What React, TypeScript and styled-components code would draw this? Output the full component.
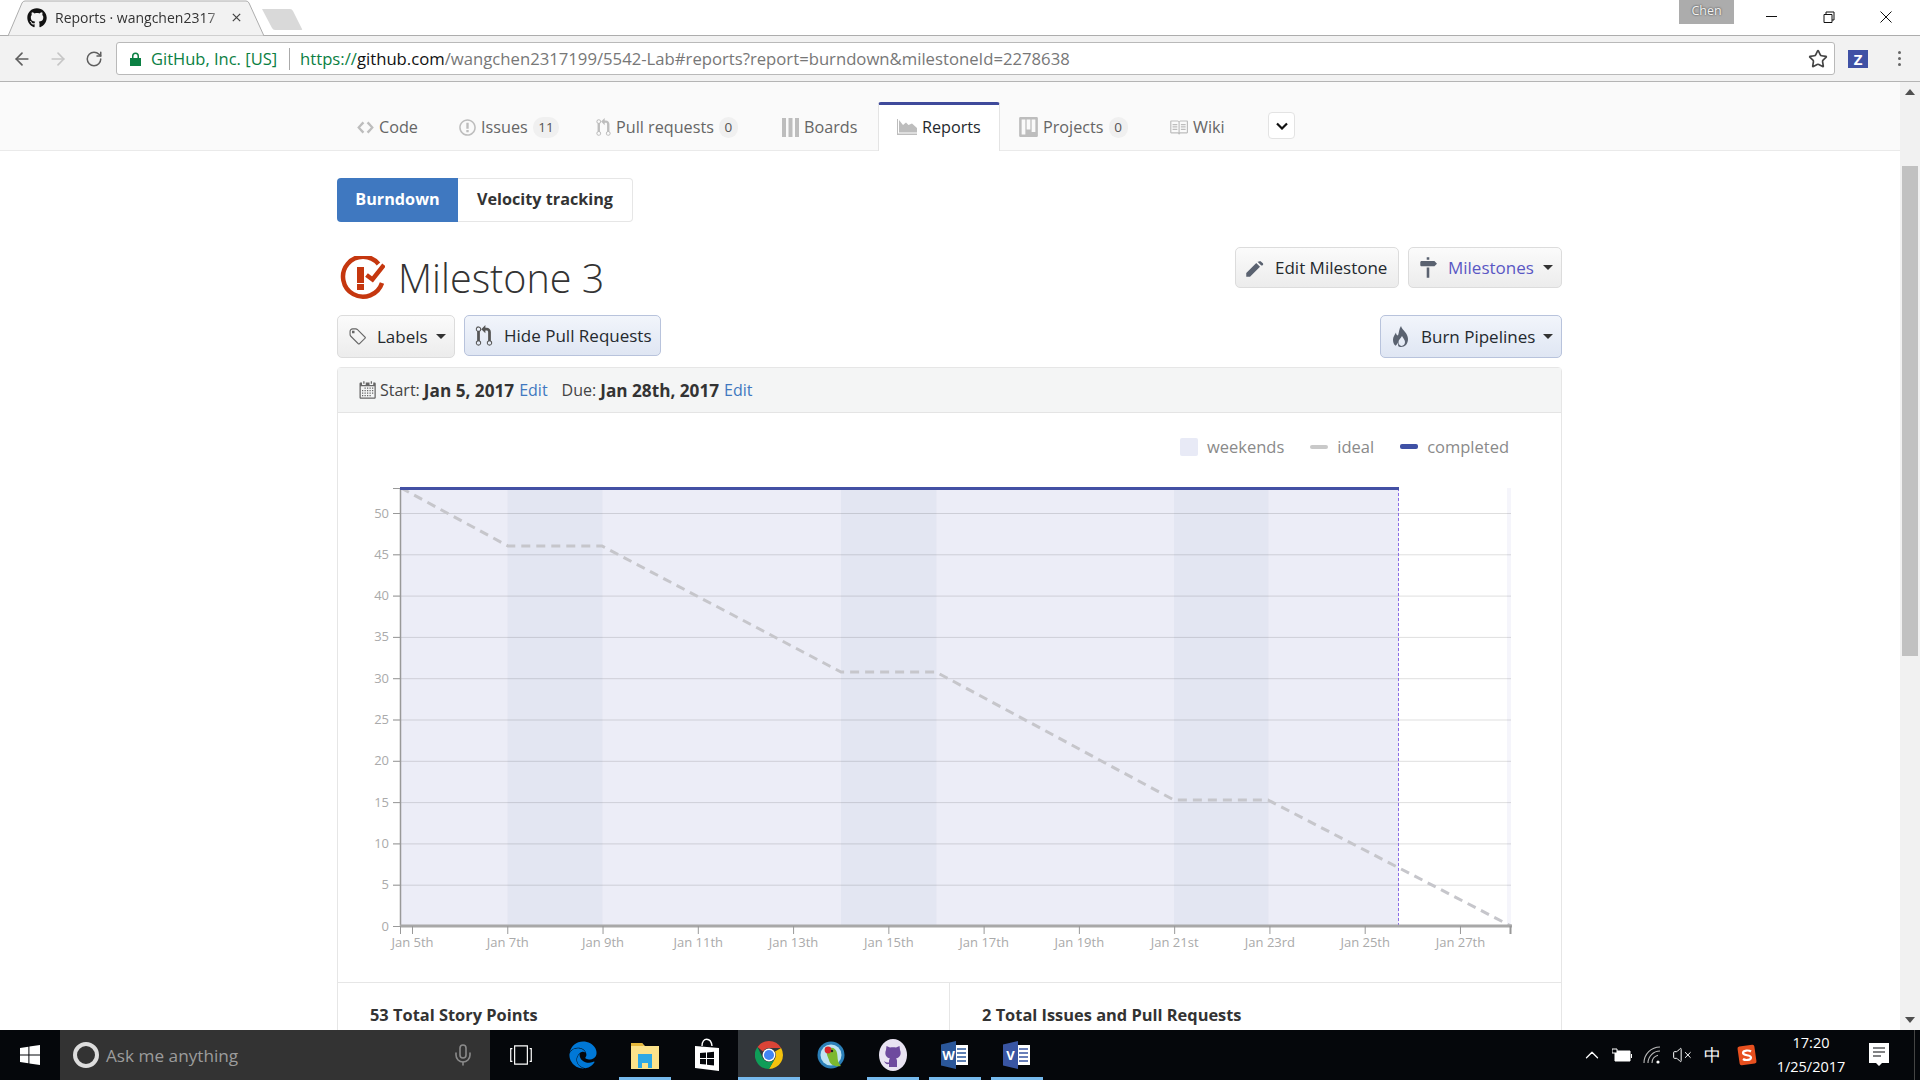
import React from 'react'
import styled, { createGlobalStyle } from 'styled-components'
import { ArrowLeft, ArrowRight, RotateCw, Star, Mic, ChevronUp, VolumeX } from 'lucide-react'
import { FaEdge, FaGithub } from 'react-icons/fa'

const FONT = `"Open Sans", "Noto Sans", "Liberation Sans", sans-serif`

const GlobalStyle = createGlobalStyle`
  html, body {
    margin: 0;
    padding: 0;
    height: 100%;
    overflow: hidden;
    background: #fff;
    font-family: ${FONT};
  }
`

const Screen = styled.div`
  width: 1920px;
  height: 1080px;
  display: flex;
  flex-direction: column;
  overflow: hidden;
`

/* browser chrome */
const TabStrip = styled.div`
  height: 35px;
  flex: none;
  position: relative;
  display: flex;
  align-items: center;
  border-bottom: 1px solid #adadad;
`
const TabShape = styled.svg`
  position: absolute;
  left: 0;
  top: 0;
`
const BrowserTab = styled.div`
  position: relative;
  margin-left: 27px;
  width: 225px;
  height: 35px;
  display: flex;
  align-items: center;
  gap: 8px;
  font-size: 14px;
  color: #333;
`
const TabTitle = styled.span`
  width: 169px;
  white-space: nowrap;
  -webkit-mask-image: linear-gradient(90deg, #000 90%, transparent);
  mask-image: linear-gradient(90deg, #000 90%, transparent);
`
const WindowControls = styled.div`
  position: absolute;
  right: 6px;
  top: 0;
  display: flex;
  align-items: flex-start;
`
const UserBadge = styled.div`
  width: 55px;
  height: 24px;
  margin-right: 9px;
  background: #acacac;
  color: #f4f4f4;
  font-size: 12.5px;
  line-height: 22px;
  text-align: center;
  text-shadow: 0 0 2px #222;
`
const WindowButton = styled.div`
  width: 57px;
  height: 34px;
  display: flex;
  align-items: center;
  justify-content: center;
`
const Toolbar = styled.div`
  height: 45px;
  flex: none;
  display: flex;
  align-items: center;
  padding-left: 4px;
  background: #f2f2f2;
  border-bottom: 1px solid #b4b4b4;
  color: #5f6368;
`
const NavButton = styled.div<{ $faded?: boolean }>`
  width: 36px;
  display: flex;
  justify-content: center;
  color: ${p => (p.$faded ? '#c6c6c6' : '#5f5f5f')};
`
const AddressBar = styled.div`
  width: 1719px;
  height: 33px;
  margin-left: 4px;
  box-sizing: border-box;
  display: flex;
  align-items: center;
  background: #fff;
  border: 1px solid #b9b9b9;
  border-radius: 3px;
  font-size: 16.5px;
  white-space: nowrap;
  position: relative;
`
const LockIcon = styled.svg`
  margin-left: 13px;
  margin-right: 10px;
`
const SecureName = styled.span`
  color: #0b8043;
  width: 126px;
`
const UrlDivider = styled.span`
  width: 1px;
  height: 22px;
  background: #aaa;
  margin: 0 10px 0 12px;
`
const UrlPart = styled.span<{ $tone: string }>`
  color: ${p => p.$tone};
  font-size: 16.7px;
`
const StarButton = styled.div`
  position: absolute;
  right: 6px;
  top: 6px;
  color: #444;
  line-height: 0;
`
const ExtensionIcon = styled.div`
  width: 20px;
  height: 18px;
  margin-left: 13px;
  background: #3f51a5;
  color: #fff;
  font-size: 15px;
  font-weight: 700;
  line-height: 18px;
  text-align: center;
`
const Kebab = styled.div`
  margin-left: 30px;
  display: flex;
  flex-direction: column;
  gap: 3px;
  span {
    width: 3px;
    height: 3px;
    border-radius: 50%;
    background: #666;
  }
`

/* page */
const Body = styled.div`
  flex: 1;
  min-height: 0;
  display: flex;
`
const Page = styled.div`
  flex: 1;
  min-width: 0;
  overflow: hidden;
`
const RepoNav = styled.nav`
  height: 68px;
  box-sizing: content-box;
  background: #fafafa;
  border-bottom: 1px solid #eaeaea;
  padding-left: 338px;
  display: flex;
  align-items: flex-end;
`
const RepoTab = styled.div<{ $width: number; $active?: boolean }>`
  width: ${p => p.$width}px;
  height: 49px;
  box-sizing: border-box;
  display: flex;
  align-items: center;
  gap: 5px;
  padding-left: 19px;
  padding-top: 1px;
  margin-bottom: -1px;
  font-size: 16.2px;
  color: ${p => (p.$active ? '#24292e' : '#666')};
  white-space: nowrap;
  ${p =>
    p.$active &&
    `
    background: #fff;
    border: 1px solid #e4e4e4;
    border-top: 3px solid #3f4a9b;
    border-bottom: 0;
    border-radius: 3px 3px 0 0;
    padding-left: 18px;
    margin-left: 2px;
    padding-top: 0;
    padding-bottom: 2px;
  `}
`
const Counter = styled.span`
  background: #f0f0f0;
  border-radius: 10px;
  padding: 0 5.5px;
  min-width: 8px;
  text-align: center;
  font-size: 13.5px;
  line-height: 21px;
  color: #555;
`
const MoreButton = styled.div`
  width: 27px;
  height: 27px;
  margin: 0 0 11px 21px;
  box-sizing: border-box;
  border: 1px solid #e3e3e3;
  border-radius: 4px;
  background: #fff;
  display: flex;
  align-items: center;
  justify-content: center;
`
const Content = styled.div`
  width: 1225px;
  margin-left: 337px;
`
const ReportSwitch = styled.div`
  display: flex;
  margin-top: 27px;
  height: 44px;
  width: fit-content;
`
const SwitchButton = styled.div<{ $on?: boolean }>`
  display: flex;
  align-items: center;
  justify-content: center;
  box-sizing: border-box;
  padding-bottom: 2px;
  font-size: 16.2px;
  font-weight: 700;
  width: ${p => (p.$on ? 121 : 175)}px;
  color: ${p => (p.$on ? '#fff' : '#333')};
  background: ${p => (p.$on ? '#3f78c0' : '#fff')};
  border: ${p => (p.$on ? '0' : '1px solid #e6e6e6')};
  border-left: 0;
  border-radius: ${p => (p.$on ? '4px 0 0 4px' : '0 4px 4px 0')};
`
const TitleRow = styled.div`
  display: flex;
  justify-content: space-between;
  align-items: flex-start;
  margin-top: 25px;
  height: 68px;
`
const MilestoneTitle = styled.h1`
  margin: 8px 0 0 2px;
  display: flex;
  align-items: center;
  gap: 13px;
  font-size: 39.5px;
  font-weight: 300;
  line-height: 46px;
  color: #333;
`
const ButtonGroup = styled.div`
  display: flex;
  gap: 9px;
`
const ActionButton = styled.div<{ $width: number; $blue?: boolean; $height?: number }>`
  width: ${p => p.$width}px;
  height: ${p => p.$height ?? 41}px;
  box-sizing: border-box;
  display: flex;
  align-items: center;
  gap: 11px;
  padding-left: 10px;
  position: relative;
  font-size: 17px;
  color: #24292e;
  border-radius: 5px;
  border: 1px solid ${p => (p.$blue ? '#b8c3dc' : '#dcdcdc')};
  background: ${p =>
    p.$blue ? 'linear-gradient(#f2f5fb, #dfe6f3)' : 'linear-gradient(#fbfbfb, #ececec)'};
  white-space: nowrap;
`
const Caret = styled.i`
  position: absolute;
  right: 8px;
  top: 50%;
  margin-top: -3px;
  border-left: 5px solid transparent;
  border-right: 5px solid transparent;
  border-top: 5px solid #333;
`
const FilterRow = styled.div`
  display: flex;
  justify-content: space-between;
  height: 43px;
  align-items: center;
`
const PurpleLabel = styled.span`
  color: #5a57c4;
`
const Panel = styled.section`
  margin-top: 9px;
  border: 1px solid #e6e6e6;
  border-radius: 4px 4px 0 0;
  height: 700px;
`
const PanelHeader = styled.div`
  height: 44px;
  background: #f4f5f5;
  border-bottom: 1px solid #e4e4e4;
  display: flex;
  align-items: center;
  padding-left: 20px;
  font-size: 16px;
  color: #444;
  white-space: nowrap;
`
const DateLabel = styled.span`
  margin-left: 4px;
`
const DueLabel = styled.span`
  margin-left: 14px;
`
const DateValue = styled.b`
  color: #333;
  margin-left: 4px;
  font-weight: 700;
  font-size: 17.2px;
`
const EditLink = styled.a`
  color: #4078c0;
  margin-left: 5px;
`
const Legend = styled.div`
  height: 57px;
  display: flex;
  justify-content: flex-end;
  align-items: center;
  padding: 10px 52px 0 0;
  box-sizing: border-box;
  font-size: 16.5px;
  color: #8a8a8a;
`
const LegendItem = styled.div`
  display: flex;
  align-items: center;
  gap: 9px;
  margin-left: 26px;
`
const Swatch = styled.span<{ $color: string; $h: number }>`
  width: 18px;
  height: ${p => p.$h}px;
  border-radius: 2px;
  background: ${p => p.$color};
`
const ChartSvg = styled.svg`
  display: block;
  font-family: ${FONT};
`
const Stats = styled.div`
  display: grid;
  grid-template-columns: 611px 1fr;
  border-top: 1px solid #e6e6e6;
  height: 200px;
`
const StatCell = styled.div<{ $divided?: boolean }>`
  padding: 20px 0 0 32px;
  font-size: 16.4px;
  font-weight: 700;
  color: #333;
  ${p => p.$divided && 'border-left: 1px solid #e6e6e6;'}
`
const ScrollBar = styled.div`
  width: 20px;
  flex: none;
  background: #f1f1f1;
  position: relative;
`
const ScrollThumb = styled.div`
  position: absolute;
  left: 2px;
  right: 2px;
  top: 84px;
  height: 490px;
  background: #c1c1c1;
`
const ScrollArrow = styled.i<{ $down?: boolean }>`
  position: absolute;
  left: 5px;
  ${p => (p.$down ? 'bottom: 7px;' : 'top: 7px;')}
  border-left: 5px solid transparent;
  border-right: 5px solid transparent;
  ${p => (p.$down ? 'border-top' : 'border-bottom')}: 6px solid #505050;
`

/* taskbar */
const Taskbar = styled.div`
  height: 50px;
  flex: none;
  background: #05070b;
  display: flex;
  color: #fff;
  position: relative;
`
const StartButton = styled.div`
  width: 60px;
  display: flex;
  align-items: center;
  justify-content: center;
`
const SearchBox = styled.div`
  width: 430px;
  background: #333;
  display: flex;
  align-items: center;
  padding-left: 13px;
  gap: 7px;
  box-sizing: border-box;
  position: relative;
  color: #9c9c9c;
  font-size: 17.2px;
`
const Cortana = styled.span`
  width: 18px;
  height: 18px;
  border-radius: 50%;
  border: 4px solid #ddd;
`
const SearchMic = styled.div`
  position: absolute;
  right: 15px;
  top: 13px;
  color: #8a8a8a;
  line-height: 0;
`
const TaskCell = styled.div<{ $active?: boolean; $open?: boolean }>`
  width: 62px;
  display: flex;
  align-items: center;
  justify-content: center;
  position: relative;
  background: ${p => (p.$active ? '#33373b' : 'transparent')};
  ${p =>
    p.$open &&
    `
    &::after {
      content: '';
      position: absolute;
      bottom: 0;
      height: 3px;
      left: ${p.$active ? 0 : 5}px;
      right: ${p.$active ? 0 : 5}px;
      background: #76b9ed;
    }
  `}
`
const Tray = styled.div`
  margin-left: auto;
  display: flex;
  align-items: center;
  height: 100%;
  padding-right: 11px;
  border-right: 1px solid #444;
  margin-right: 5px;
`
const TrayCell = styled.div<{ $width?: number }>`
  width: ${p => p.$width ?? 30}px;
  display: flex;
  justify-content: center;
  align-items: center;
  font-size: 17px;
`
const Clock = styled.div`
  width: 88px;
  text-align: center;
  font-size: 14.5px;
  line-height: 24px;
`

const Octicon = ({ w, h, d, color = '#bdbdbd', box }: { w: number; h: number; d: string; color?: string; box: string }) => (
  <svg width={w} height={h} viewBox={box} fill={color} fillRule="evenodd">
    <path d={d} />
  </svg>
)

const CODE = 'M9.5 3L8 4.5 11.5 8 8 11.5 9.5 13 14 8 9.5 3zm-5 0L0 8l4.5 5L6 11.5 2.5 8 6 4.5 4.5 3z'
const ISSUE = 'M7 2.3c3.14 0 5.7 2.56 5.7 5.7s-2.56 5.7-5.7 5.7A5.71 5.71 0 0 1 1.3 8c0-3.14 2.56-5.7 5.7-5.7zM7 1C3.14 1 0 4.14 0 8s3.14 7 7 7 7-3.14 7-7-3.14-7-7-7zm1 3H6v5h2V4zm0 6H6v2h2v-2z'
const PULL = 'M11 11.28V5c-.03-.78-.34-1.47-.94-2.06C9.46 2.35 8.78 2.03 8 2H7V0L4 3l3 3V4h1c.27.02.48.11.69.31.21.2.3.42.31.69v6.28A1.993 1.993 0 0 0 10 15a1.993 1.993 0 0 0 1-3.72zm-1 2.92c-.66 0-1.2-.55-1.2-1.2 0-.65.55-1.2 1.2-1.2.65 0 1.2.55 1.2 1.2 0 .65-.55 1.2-1.2 1.2zM4 3c0-1.11-.89-2-2-2a1.993 1.993 0 0 0-1 3.72v6.56A1.993 1.993 0 0 0 2 15a1.993 1.993 0 0 0 1-3.72V4.72c.59-.34 1-.98 1-1.72zm-.8 10c0 .66-.55 1.2-1.2 1.2-.65 0-1.2-.55-1.2-1.2 0-.65.55-1.2 1.2-1.2.65 0 1.2.55 1.2 1.2zM2 4.2C1.34 4.2.8 3.65.8 3c0-.65.55-1.2 1.2-1.2.65 0 1.2.55 1.2 1.2 0 .65-.55 1.2-1.2 1.2z'
const PROJECT = 'M10 12h3V2h-3v10zm-4-2h3V2H6v8zm-4 4h3V2H2v12zM14 0H1a1 1 0 0 0-1 1v14a1 1 0 0 0 1 1h13a1 1 0 0 0 1-1V1a1 1 0 0 0-1-1z'
const BOOK = 'M3 5h4v1H3V5zm0 3h4V7H3v1zm0 2h4V9H3v1zm11-5h-4v1h4V5zm0 2h-4v1h4V7zm0 2h-4v1h4V9zm2-6v9c0 .55-.45 1-1 1H9.5l-1 1-1-1H2c-.55 0-1-.45-1-1V3c0-.55.45-1 1-1h5.5l1 1 1-1H15c.55 0 1 .45 1 1zm-8 .5L7.5 3H2v9h6V3.5zm7-.5H9.5l-.5.5V12h6V3z'
const TAG = 'M7.73 1.73C7.26 1.26 6.62 1 5.96 1H3.5C2.13 1 1 2.13 1 3.5v2.47c0 .66.27 1.3.73 1.77l6.06 6.06c.39.39 1.02.39 1.41 0l4.59-4.59a.996.996 0 0 0 0-1.41L7.73 1.73zM2.38 7.09c-.31-.3-.47-.7-.47-1.13V3.5c0-.88.72-1.59 1.59-1.59h2.47c.42 0 .83.16 1.13.47l6.14 6.13-4.73 4.73-6.13-6.15zM3.01 3h2v2H3V3h.01z'
const CALENDAR = 'M13 2h-1v1.5c0 .28-.22.5-.5.5h-2c-.28 0-.5-.22-.5-.5V2H6v1.5c0 .28-.22.5-.5.5h-2c-.28 0-.5-.22-.5-.5V2H2c-.55 0-1 .45-1 1v11c0 .55.45 1 1 1h11c.55 0 1-.45 1-1V3c0-.55-.45-1-1-1zm0 12H2V5h11v9zM5 3H4V1h1v2zm6 0h-1V1h1v2zM6 7H5V6h1v1zm2 0H7V6h1v1zm2 0H9V6h1v1zm2 0h-1V6h1v1zM4 9H3V8h1v1zm2 0H5V8h1v1zm2 0H7V8h1v1zm2 0H9V8h1v1zm2 0h-1V8h1v1zm-8 2H3v-1h1v1zm2 0H5v-1h1v1zm2 0H7v-1h1v1zm2 0H9v-1h1v1zm2 0h-1v-1h1v1zm-8 2H3v-1h1v1zm2 0H5v-1h1v1zm2 0H7v-1h1v1zm2 0H9v-1h1v1z'
const PENCIL = 'M0 12v3h3l8-8-3-3-8 8zm10.3-9.3a.996.996 0 0 1 1.41 0l1.59 1.59c.39.39.39 1.02 0 1.41L12 6 9 3z'
const SIGNPOST = 'M8 2H6V0h2v2zm4 5H2c-.55 0-1-.45-1-1V4c0-.55.45-1 1-1h10l2 2-2 2zM6 16h2V8H6v8z'
const FLAME = 'M9 0c1 4 7 7 7 13 0 5-3 8-7 8-.6 0-1.200-.1-1.700-.2C5.500 20.400 6.500 18 6 16.500c-.4 1.500-2 2.500-2.500 3.300C1.500 18.400 1 16 1 13.500c0-3 2-5 3-7 0 2 1 3 2 3 1-3 1-6.500 3-9.500zm.5 20c2.200-.2 3.500-1.800 3.500-4 0-2.200-2-3.700-3-6-1 2.300-3.500 3.500-3.500 6 0 2 1.300 3.800 3 4z'

const WindowsLogo = ({ size, color = '#fff' }: { size: number; color?: string }) => (
  <svg width={size} height={size} viewBox="0 0 20 20" fill={color}>
    <path d="M0 3l8.4-1.2v7.7H0zM9.4 1.6L20 0v9.5H9.4zM0 10.5h8.4v7.7L0 17zM9.4 10.5H20V20L9.4 18.4z" />
  </svg>
)

const ChromeLogo = () => (
  <svg width="28" height="28" viewBox="-10 -10 20 20">
    <path d="M0-10A10 10 0 0 1 8.66-5L0 -5A5 5 0 0 0-4.3-2.5L-8.2-5.8A10 10 0 0 1 0-10z" fill="#db4437" />
    <path d="M8.66-5A10 10 0 0 1 0 10L4.3 2.5A5 5 0 0 0 4.3-2.5z" fill="#f4c20d" />
    <path d="M0 10A10 10 0 0 1-8.2-5.8L-4.3 2.5A5 5 0 0 0 4.3 2.5z" fill="#0f9d58" />
    <circle r="4.6" fill="#fff" />
    <circle r="3.6" fill="#4285f4" />
  </svg>
)

const ParrotLogo = () => (
  <svg width="28" height="30" viewBox="0 0 28 30">
    <circle cx="14" cy="15" r="13.5" fill="#2b7fb8" />
    <circle cx="14" cy="15" r="10.5" fill="#bfe3f2" />
    <path d="M10 10c4-4 9-2 10 3 1 5 0 9 4 13-6 1-11-1-12-6-1-3-3-6-2-10z" fill="#7cb82f" />
    <circle cx="11" cy="10" r="3.4" fill="#d8262c" />
    <circle cx="15" cy="11" r="1.2" fill="#222" />
  </svg>
)

const FolderLogo = () => (
  <svg width="28" height="28" viewBox="0 0 28 28">
    <path d="M0 2h11l3 3h14v23H0z" fill="#fce28a" />
    <path d="M0 2h11l2 3H0z" fill="#e6b83c" />
    <path d="M7 13h14v14h-4v-5h-6v5H7z" fill="#2ea8e5" />
  </svg>
)

const StoreLogo = () => (
  <svg width="26" height="34" viewBox="0 0 26 34">
    <path d="M8 8c0-9 9-9 10 0" fill="none" stroke="#fff" strokeWidth="1.4" />
    <path d="M1 8l24 2v23L1 30z" fill="#fff" />
    <path d="M6 15l6-.5v5.5H6zM13 14.4l7-.6V20h-7zM6 21h6v5.5L6 26zM13 21h7v6.5l-7-.7z" fill="#05070b" />
  </svg>
)

const OfficeLogo = ({ letter, color }: { letter: string; color: string }) => (
  <svg width="28" height="28" viewBox="0 0 28 28">
    <path d="M10 4h17v20H10z" fill="#fff" />
    <path d="M0 3.500L15 0v28L0 24.500z" fill={color} />
    <path d="M16 8h9M16 12h9M16 16h9M16 20h9" stroke={color} strokeWidth="1.600" />
    <text x="7.500" y="19" textAnchor="middle" fontSize="13" fontWeight="700" fill="#fff" fontFamily="Open Sans, sans-serif">{letter}</text>
  </svg>
)

const GithubDesktopLogo = () => (
  <svg width="28" height="32" viewBox="0 0 28 32">
    <ellipse cx="14" cy="16" rx="14" ry="16" fill="#e9e3f2" />
    <path
      d="M7.500 7l3.500 1.500c2-.5 4-.5 6 0L20.500 7l.5 4c1.500 3.500.5 7.500-4 8.500 1 .8 1 2 1 3V28h-8v-3c-2.500.5-4-.5-5-3 1 .5 2 1.500 3 1.500h2v-1c0-1 0-2.200 1-3-4.500-1-5.500-5-4-8.500z"
      fill="#6e4a9e"
    />
  </svg>
)

const MilestoneLogo = () => (
  <svg width="46" height="44" viewBox="0 0 46 44">
    <path d="M39.500 8A20 20 0 1 0 43 27" fill="none" stroke="#c5370f" strokeWidth="4.500" />
    <path d="M18 11h7v16h-7zM18 28h7v6h-7z" fill="#c5370f" />
    <path d="M27.500 19l6 4.500L45 9" fill="none" stroke="#c5370f" strokeWidth="4.500" />
  </svg>
)

const X_TICKS = ['Jan 5th', 'Jan 7th', 'Jan 9th', 'Jan 11th', 'Jan 13th', 'Jan 15th', 'Jan 17th', 'Jan 19th', 'Jan 21st', 'Jan 23rd', 'Jan 25th', 'Jan 27th']
const Y_TICKS = [0, 5, 10, 15, 20, 25, 30, 35, 40, 45, 50]
const BANDS: [number, number][] = [[507.5, 602.5], [841, 936.5], [1174, 1268.5]]
const yFor = (v: number) => 926 - v * 8.26

function BurndownChart() {
  return (
    <ChartSvg width={1223} height={512} viewBox="338 470 1223 512">
      <rect x={401} y={488} width={998} height={438} fill="#ecedf7" />
      {BANDS.map(([a, b]) => (
        <rect key={a} x={a} y={488} width={b - a} height={438} fill="#e3e6f2" />
      ))}
      <rect x={1507} y={488} width={4} height={438} fill="#f5f5fb" />
      {Y_TICKS.map(v => (
        <g key={v}>
          {v > 0 && <line x1={393} x2={1511} y1={yFor(v) + 0.5} y2={yFor(v) + 0.5} stroke="#000" strokeOpacity={0.13} />}
          <line x1={393} x2={401} y1={yFor(v) + 0.5} y2={yFor(v) + 0.5} stroke="#999" />
          <text x={389} y={yFor(v) + 4.5} textAnchor="end" fontSize={13} fill="#aaa">{v}</text>
        </g>
      ))}
      <line x1={393} x2={401} y1={488.5} y2={488.5} stroke="#999" />
      <line x1={400.5} x2={400.5} y1={488} y2={926} stroke="#999" strokeWidth={1.5} />
      <line x1={1398.5} x2={1398.5} y1={488} y2={926} stroke="#8a6be8" strokeDasharray="3 2" />
      <polyline
        points="401,488 508,546 602,546 841,672 936,672 1174,800 1268,800 1511,926"
        fill="none"
        stroke="#c6c6cb"
        strokeWidth={3}
        strokeDasharray="9 6"
      />
      <line x1={400} x2={1399} y1={488.5} y2={488.5} stroke="#4350a4" strokeWidth={3} />
      <line x1={400} x2={1512} y1={926} y2={926} stroke="#a8a8a8" strokeWidth={3} />
      <line x1={400.5} x2={400.5} y1={926} y2={934} stroke="#999" />
      <line x1={1510.5} x2={1510.5} y1={926} y2={934} stroke="#999" strokeWidth={2} />
      {X_TICKS.map((label, i) => {
        const x = 412.5 + i * 95.27
        return (
          <g key={label}>
            <line x1={x} x2={x} y1={926} y2={934} stroke="#999" />
            <text x={x} y={947} textAnchor="middle" fontSize={13} fill="#aaa">{label}</text>
          </g>
        )
      })}
    </ChartSvg>
  )
}

export default function App() {
  return (
    <Screen>
      <GlobalStyle />
      <TabStrip>
        <TabShape width="320" height="36" viewBox="0 0 320 36">
          <path d="M8 36L22 3q1-2 3-2h221q2 0 3 2l15 33z" fill="#f2f2f2" stroke="#adadad" />
          <path d="M262 9h28q2 0 3 2l9 18q1 1-1 1h-26q-2 0-3-2z" fill="#d9d9d9" />
        </TabShape>
        <BrowserTab>
          <FaGithub size={20} color="#111" />
          <TabTitle>Reports · wangchen2317</TabTitle>
          <svg width="9" height="9" viewBox="0 0 11 11" stroke="#444" strokeWidth="1.500">
            <path d="M1 1l9 9M10 1l-9 9" />
          </svg>
        </BrowserTab>
        <WindowControls>
          <UserBadge>Chen</UserBadge>
          <WindowButton>
            <svg width="11" height="2"><rect width="11" height="1" y="0" fill="#111" /></svg>
          </WindowButton>
          <WindowButton>
            <svg width="12" height="12" viewBox="0 0 12 12" fill="none" stroke="#111">
              <path d="M3 3V1h8v8H9M1 3.500h8v8H1z" />
            </svg>
          </WindowButton>
          <WindowButton>
            <svg width="12" height="12" viewBox="0 0 12 12" stroke="#111">
              <path d="M.5.5l11 11M11.500.5l-11 11" />
            </svg>
          </WindowButton>
        </WindowControls>
      </TabStrip>

      <Toolbar>
        <NavButton><ArrowLeft size={20} /></NavButton>
        <NavButton $faded><ArrowRight size={20} /></NavButton>
        <NavButton><RotateCw size={18} /></NavButton>
        <AddressBar>
          <LockIcon width="11" height="14" viewBox="0 0 11 14">
            <path d="M2 6V4a3.500 3.500 0 0 1 7 0v2h2v8H0V6zm1.500 0h4V4a2 2 0 0 0-4 0z" fill="#0b8043" />
          </LockIcon>
          <SecureName>GitHub, Inc. [US]</SecureName>
          <UrlDivider />
          <UrlPart $tone="#0b8043">https://</UrlPart>
          <UrlPart $tone="#111">github.com</UrlPart>
          <UrlPart $tone="#777">/wangchen2317199/5542-Lab#reports?report=burndown&amp;milestoneId=2278638</UrlPart>
          <StarButton><Star size={20} /></StarButton>
        </AddressBar>
        <ExtensionIcon>Z</ExtensionIcon>
        <Kebab><span /><span /><span /></Kebab>
      </Toolbar>

      <Body>
        <Page>
          <RepoNav>
            <RepoTab $width={102}>
              <Octicon box="0 0 14 16" w={17} h={19} d={CODE} />Code
            </RepoTab>
            <RepoTab $width={137}>
              <Octicon box="0 0 14 16" w={17} h={19} d={ISSUE} />Issues<Counter>11</Counter>
            </RepoTab>
            <RepoTab $width={186}>
              <Octicon box="0 0 12 16" w={15} h={19} d={PULL} />Pull requests<Counter>0</Counter>
            </RepoTab>
            <RepoTab $width={113}>
              <svg width="17" height="19" viewBox="0 0 17 19" fill="#bdbdbd">
                <path d="M0 0h4v19H0zM6.500 0h4v19h-4zM13 0h4v19h-4z" />
              </svg>Boards
            </RepoTab>
            <RepoTab $width={122} $active>
              <svg width="20" height="16" viewBox="0 0 20 16" fill="#bdbdbd">
                <path d="M0 0h1v14.500h19V16H0zM2 13.500V1l4 5 3-2.500 2.500 2.500 3.500-1.500 5 4.500v4.500z" />
              </svg>Reports
            </RepoTab>
            <RepoTab $width={150}>
              <Octicon box="0 0 15 16" w={19} h={20} d={PROJECT} />Projects<Counter>0</Counter>
            </RepoTab>
            <RepoTab $width={97}>
              <Octicon box="0 0 16 16" w={19} h={19} d={BOOK} />Wiki
            </RepoTab>
            <MoreButton>
              <svg width="12" height="8" viewBox="0 0 12 8" fill="none" stroke="#111" strokeWidth="2.200">
                <path d="M1 1.500l5 5 5-5" />
              </svg>
            </MoreButton>
          </RepoNav>

          <Content>
            <ReportSwitch>
              <SwitchButton $on>Burndown</SwitchButton>
              <SwitchButton>Velocity tracking</SwitchButton>
            </ReportSwitch>

            <TitleRow>
              <MilestoneTitle>
                <MilestoneLogo />
                Milestone 3
              </MilestoneTitle>
              <ButtonGroup>
                <ActionButton $width={164}>
                  <Octicon box="0 0 14 16" w={18} h={20} d={PENCIL} color="#5a6270" />Edit Milestone
                </ActionButton>
                <ActionButton $width={154}>
                  <Octicon box="0 0 14 16" w={18} h={21} d={SIGNPOST} color="#5a6270" />
                  <PurpleLabel>Milestones</PurpleLabel>
                  <Caret />
                </ActionButton>
              </ButtonGroup>
            </TitleRow>

            <FilterRow>
              <ButtonGroup>
                <ActionButton $width={118} $height={43}>
                  <Octicon box="0 0 14 16" w={18} h={20} d={TAG} color="#666" />Labels
                  <Caret />
                </ActionButton>
                <ActionButton $width={197} $blue>
                  <Octicon box="0 0 12 16" w={18} h={22} d={PULL} color="#555" />Hide Pull Requests
                </ActionButton>
              </ButtonGroup>
              <ActionButton $width={182} $height={43} $blue>
                <Octicon box="0 0 17 21" w={19} h={21} d={FLAME} color="#5a6270" />Burn Pipelines
                <Caret />
              </ActionButton>
            </FilterRow>

            <Panel>
              <PanelHeader>
                <Octicon box="0 0 14 16" w={18} h={20} d={CALENDAR} color="#666" />
                <DateLabel>Start:</DateLabel>
                <DateValue>Jan 5, 2017</DateValue>
                <EditLink>Edit</EditLink>
                <DueLabel>Due:</DueLabel>
                <DateValue>Jan 28th, 2017</DateValue>
                <EditLink>Edit</EditLink>
              </PanelHeader>
              <Legend>
                <LegendItem><Swatch $color="#e8eaf6" $h={18} />weekends</LegendItem>
                <LegendItem><Swatch $color="#c9c9c9" $h={4} />ideal</LegendItem>
                <LegendItem><Swatch $color="#3f51a5" $h={5} />completed</LegendItem>
              </Legend>
              <BurndownChart />
              <Stats>
                <StatCell>53 Total Story Points</StatCell>
                <StatCell $divided>2 Total Issues and Pull Requests</StatCell>
              </Stats>
            </Panel>
          </Content>
        </Page>
        <ScrollBar>
          <ScrollArrow />
          <ScrollThumb />
          <ScrollArrow $down />
        </ScrollBar>
      </Body>

      <Taskbar>
        <StartButton><WindowsLogo size={20} /></StartButton>
        <SearchBox>
          <Cortana />
          Ask me anything
          <SearchMic><Mic size={24} strokeWidth={1.6} /></SearchMic>
        </SearchBox>
        <TaskCell>
          <svg width="24" height="20" viewBox="0 0 24 22" fill="none" stroke="#fff" strokeWidth="1.300">
            <path d="M5 1h14v20H5zM2.500 4H.7v14h1.800M21.500 4h1.800v14h-1.800" />
          </svg>
        </TaskCell>
        <TaskCell><FaEdge size={28} color="#0078d7" /></TaskCell>
        <TaskCell $open><FolderLogo /></TaskCell>
        <TaskCell><StoreLogo /></TaskCell>
        <TaskCell $active $open><ChromeLogo /></TaskCell>
        <TaskCell><ParrotLogo /></TaskCell>
        <TaskCell $open><GithubDesktopLogo /></TaskCell>
        <TaskCell $open><OfficeLogo letter="W" color="#2b579a" /></TaskCell>
        <TaskCell $open><OfficeLogo letter="V" color="#3955a3" /></TaskCell>
        <Tray>
          <TrayCell><ChevronUp size={22} strokeWidth={1.4} /></TrayCell>
          <TrayCell>
            <svg width="20" height="14" viewBox="0 0 20 14">
              <path d="M3 3h15v10H3z" fill="#fff" stroke="#fff" />
              <path d="M19 6h1v4h-1z" fill="#fff" />
              <path d="M0 1h5v4H0z" fill="#05070b" stroke="#fff" />
            </svg>
          </TrayCell>
          <TrayCell>
            <svg width="18" height="18" viewBox="0 0 18 18" fill="none" stroke="#bbb" strokeWidth="1.100">
              <path d="M1 17A16 16 0 0 1 17 1M5 17A12 12 0 0 1 17 5M9 17a8 8 0 0 1 6-7.700" />
              <circle cx="15" cy="16" r="1.600" fill="#fff" stroke="none" />
            </svg>
          </TrayCell>
          <TrayCell><VolumeX size={20} strokeWidth={1.2} /></TrayCell>
          <TrayCell>中</TrayCell>
          <TrayCell $width={40}>
            <svg width="20" height="22" viewBox="0 0 20 22">
              <rect x="1.500" y="1.500" width="17" height="19" rx="2" fill="#e8501f" transform="rotate(-8 10 11)" />
              <path d="M14 7.500c-2-1.500-8-1.500-8 1.500s8 1.500 8 4.500-6 3-8 1.500" fill="none" stroke="#fff" strokeWidth="2.200" />
            </svg>
          </TrayCell>
          <Clock>17:20<br />1/25/2017</Clock>
          <TrayCell $width={48}>
            <svg width="20" height="24" viewBox="0 0 20 24">
              <path d="M0 0h20v20h-7l-3 3-3-3H0z" fill="#fff" />
              <path d="M4 5h12M4 9h12M4 13h8" stroke="#05070b" strokeWidth="1.200" />
            </svg>
          </TrayCell>
        </Tray>
      </Taskbar>
    </Screen>
  )
}
